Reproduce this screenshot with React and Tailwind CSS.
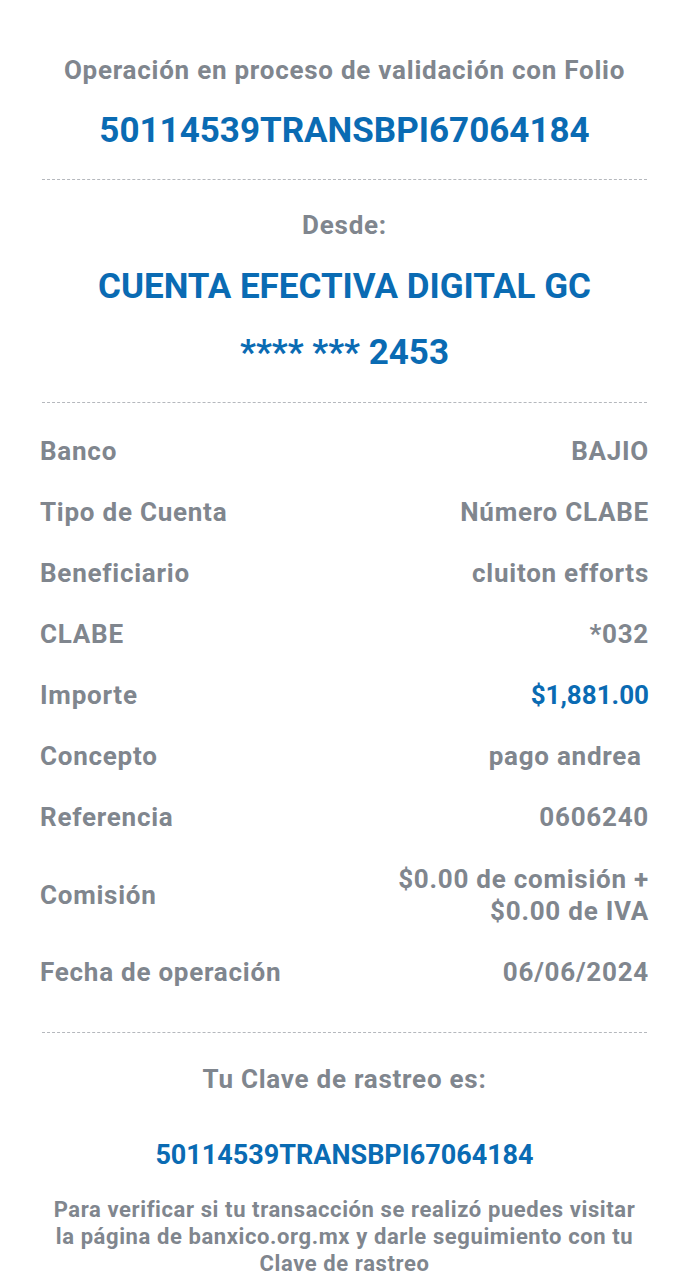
export default function App() {
  const rows = [
    ["Banco", "BAJIO"],
    ["Tipo de Cuenta", "Número CLABE"],
    ["Beneficiario", "cluiton efforts"],
    ["CLABE", "*032"],
    ["Importe", "$1,881.00", true],
    ["Concepto", "pago andrea\u00a0"],
    ["Referencia", "0606240"],
  ];
  const gray = "text-[#80868e]";
  return (
    <div className="w-[689px] min-h-[1280px] bg-white px-[40px] pt-[52px] font-['Roboto',sans-serif] font-bold">
      <div className={`text-center text-[26px] leading-[36px] tracking-[0.75px] whitespace-nowrap ${gray}`}>Operación en proceso de validación con Folio</div>
      <div className="text-center text-[35px] leading-[40px] mt-[23px] text-[#0a6bb3]">50114539TRANSBPI67064184</div>
      <div className="mx-[2px] mt-[28px] border-t border-dashed border-[#b5b8bd]"></div>
      <div className={`text-center text-[26px] leading-[36px] tracking-[0.75px] mt-[27px] ${gray}`}>Desde:</div>
      <div className="text-center text-[35px] leading-[40px] mt-[24px] text-[#0a6bb3] whitespace-nowrap">CUENTA EFECTIVA DIGITAL GC</div>
      <div className="text-center text-[35px] leading-[40px] mt-[26px] text-[#0a6bb3]">**** *** 2453</div>
      <div className="mx-[2px] mt-[29px] border-t border-dashed border-[#b5b8bd]"></div>
      <div className={`flex flex-col mt-[18px] text-[26px] tracking-[0.75px] ${gray}`}>
        {rows.map(([k, v, blue]) => (
          <div key={k} className="flex justify-between h-[61px] items-center">
            <span>{k}</span>
            <span className={blue ? "text-[#0a6bb3] tracking-normal" : ""}>{v}</span>
          </div>
        ))}
        <div className="flex justify-between items-center h-[94px]">
          <span>Comisión</span>
          <span className="text-right leading-[32px]">$0.00 de comisión +<br />$0.00 de IVA</span>
        </div>
        <div className="flex justify-between h-[61px] items-center">
          <span>Fecha de operación</span>
          <span>06/06/2024</span>
        </div>
      </div>
      <div className="mx-[2px] mt-[29px] border-t border-dashed border-[#b5b8bd]"></div>
      <div className={`text-center text-[26px] leading-[36px] tracking-[0.75px] mt-[28px] ${gray}`}>Tu Clave de rastreo es:</div>
      <div className="text-center text-[27px] leading-[36px] mt-[40px] text-[#0a6bb3]">50114539TRANSBPI67064184</div>
      <div className={`text-center text-[22px] leading-[27px] tracking-[0.6px] mt-[23px] px-[8px] ${gray}`}>
        Para verificar si tu transacción se realizó puedes visitar la página de banxico.org.mx y darle seguimiento con tu Clave de rastreo
      </div>
    </div>
  );
}
